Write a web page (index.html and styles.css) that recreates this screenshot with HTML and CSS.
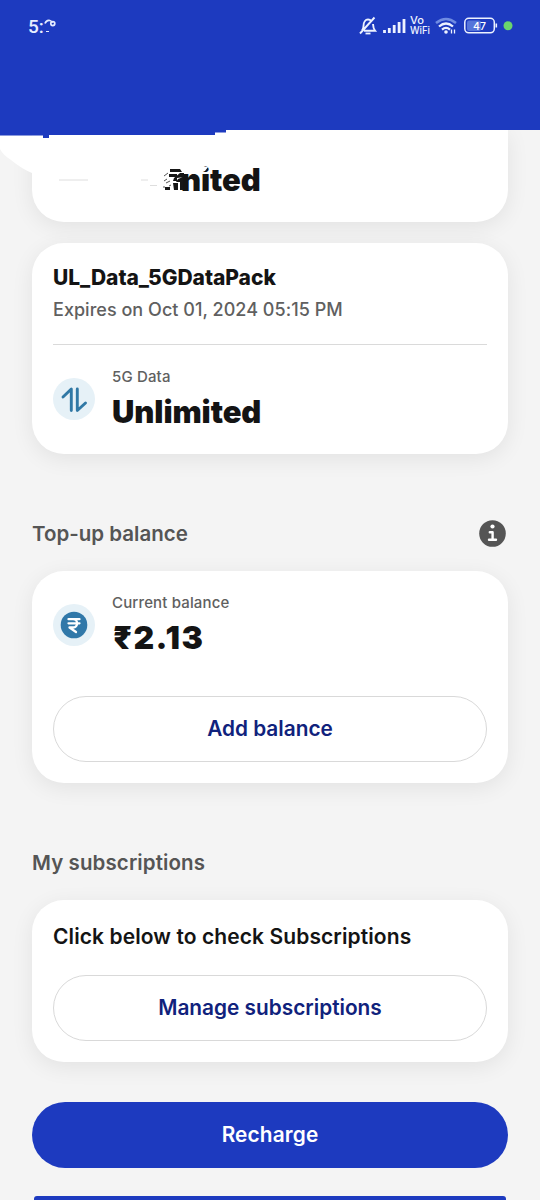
FILE: index.html
```html
<!DOCTYPE html>
<html lang="en">
<head>
<meta charset="utf-8">
<title>Balance</title>
<link rel="stylesheet" href="styles.css">
</head>
<body>
<div class="screen">
  <header class="header">
    <div class="time">5:<svg class="time-rest" width="14" height="16" viewBox="0 0 14 16" fill="none" stroke="#e4ebff" stroke-width="1.7"><path d="M1 5.500Q2.500 1.500 6 2.500Q8 3 8 5"/><circle cx="8.800" cy="5.600" r="2"/><path d="M2 13.500h3" stroke-width="1"/></svg></div>
    <div class="status">
      <svg width="174" height="24" viewBox="356 14 174 24" fill="none" stroke="#edf2ff">
        <path d="M362 30.500q1.500-1.500 1.500-4.500c0-4 2-6.500 4.500-6.500 1.500 0 2.500.5 3.200 1.500M373 24c.2 3.500.5 5 2 6.700H364M360 33.500 374.500 17.500" stroke-width="1.9"/><path d="M365.500 33.500h5" stroke-width="1.800"/>
        <path d="M384.500 33v-3M389.300 33v-5M394.200 33v-8M399.100 33v-11M404 33v-14" stroke-width="2.800"/>
        <g fill="#edf2ff" stroke="none" class="vowifi"><text x="410" y="23.500" textLength="14" lengthAdjust="spacingAndGlyphs">Vo</text><text x="410" y="34.300" textLength="20" lengthAdjust="spacingAndGlyphs">WiFi</text></g>
        <path d="M436 23q10-8 20 0" stroke="#6f8be2" stroke-width="2.600"/>
        <path d="M439 26.500q7-6 14 0M442 29.600q4-3.500 8 0" stroke-width="2.300"/><circle cx="446" cy="32" r="1.800" fill="#edf2ff" stroke="none"/>
        <path d="M451.500 33.500v-4M454.500 29.500v4" stroke-width="1.300"/>
        <rect x="467" y="20.500" width="14" height="10.500" rx="2" fill="#5675da" stroke="none"/>
        <rect x="464.800" y="18.300" width="29.500" height="14.500" rx="4" stroke-width="1.500"/><path d="M496.300 23.500v4" stroke-width="1.600"/>
        <text class="battery" x="479.500" y="29.800" text-anchor="middle" fill="#fff" stroke="none">47</text>
        <circle cx="508" cy="25.700" r="4.500" fill="#6bd56c" stroke="none"/>
      </svg>
    </div>
  </header>
  <main class="content">
    <section class="card card-top"><div class="value value-part">nited</div></section>
    <section class="card pack">
      <h2 class="pack-name">UL_Data_5GDataPack</h2>
      <p class="expiry">Expires on Oct 01, 2024 05:15 PM</p>
      <div class="row usage">
        <svg class="icon" viewBox="0 0 42 42"><circle cx="21" cy="21" r="21" fill="#e6f1f7"/><path d="M10 19 18.300 11v21.500M24.300 11v21.500L32.500 25" fill="none" stroke="#3078a5" stroke-width="2.900" stroke-linecap="round" stroke-linejoin="round"/></svg>
        <div><div class="label">5G Data</div><div class="value">Unlimited</div></div>
      </div>
    </section>
    <div class="section-head"><h3 class="heading">Top-up balance</h3>
      <svg class="info" width="28" height="28" viewBox="0 0 28 28"><circle cx="14.500" cy="14.500" r="13.300" fill="#555"/><circle cx="14.500" cy="7.500" r="2.100" fill="#fff"/><path d="M11.800 13.200H14.600V20.500M11 20.800H18" fill="none" stroke="#fff" stroke-width="2.400" stroke-linecap="round" stroke-linejoin="round"/></svg>
    </div>
    <section class="card balance">
      <div class="row">
        <svg class="icon" viewBox="0 0 42 42"><circle cx="21" cy="21" r="21" fill="#e6f1f7"/><circle cx="21" cy="21" r="13.300" fill="#3078a9"/><path d="M15.500 15.200h11M15.500 19.300h11M16.500 15.200h3.500c5.500 0 5.500 8.300 0 8.300h-3.500l6.500 4.500" fill="none" stroke="#fff" stroke-width="2.300" stroke-linecap="round" stroke-linejoin="round"/></svg>
        <div><div class="label balance-label">Current balance</div><div class="value amount">₹2.13</div></div>
      </div>
      <button class="button outline">Add balance</button>
    </section>
    <div class="section-head"><h3 class="heading subs">My subscriptions</h3></div>
    <section class="card subscriptions">
      <p class="prompt">Click below to check Subscriptions</p>
      <button class="button outline manage">Manage subscriptions</button>
    </section>
    <button class="button primary">Recharge</button>
    <div class="next-button"></div>
  </main>
  <svg class="smear" width="280" height="70" viewBox="0 130 280 70">
    <path d="M0 135.500H215V132.500H226V130H280V160H90L32 173Q22 169 11 160Q3 155 0 149Z" fill="#fff"/>
    <path d="M0 130H226V132.500H215V135H49V138H43V135.500H0Z" fill="#1d3abf"/>
    <path d="M59 180H88M141 180h7M150 185.500h7" stroke="#dedede" fill="none"/>
    <path d="M170 169h10l2 3h-12zM169 174h8v3h-8zM174 178l6-5h4v4l-7 1v3h-4zM173 183h5v7h-4zM178 179l5-2v13h-3v-8h-4zM165 187h5v3h-5z" fill="#161616"/>
    <path d="M164 176l4-3M164 181l3-2M163 187h2M166 183l4-2M169 186l2-1" stroke="#555" stroke-width="1"/>
    <path d="M202 167h6l-3 4h-3z" fill="#fff"/>
  </svg>
</div>
</body>
</html>
```

FILE: styles.css
```css
* { box-sizing: border-box; }
body { margin: 0; background: #f4f4f4; font-family: Inter, "Noto Sans", sans-serif; color: #141414; }
h2, h3, p { margin: 0; }
.screen { position: relative; width: 540px; height: 1200px; overflow: hidden; }
.header { height: 130px; background: #1d3abf; display: flex; justify-content: space-between; padding: 14px 10px 0 28px; position: relative; z-index: 2; }
.time { display: flex; height: 26px; align-items: center; font: 500 19px/26px Roboto, sans-serif; color: #e8eeff; }
.time-rest { margin-top: -3px; }
.status { height: 24px; }
.status svg { display: block; }
.vowifi { font: 500 10px/1 Inter, sans-serif; }
.battery { font: 500 10.5px Inter, sans-serif; }
.content { padding: 0 32px; }
.card { background: #fff; border-radius: 32px; padding: 0 21px; box-shadow: 0 5px 22px rgba(0, 0, 0, .075); }
.card-top { height: 92px; border-radius: 0 0 32px 32px; padding: 32px 21px 0 149px; }
.pack { height: 211px; margin-top: 21px; padding-top: 22px; }
.pack-name { font-size: 21px; line-height: 25px; font-weight: 850; letter-spacing: -.03px; }
.expiry { margin-top: 8px; font-size: 18px; line-height: 24px; font-weight: 450; letter-spacing: .03px; color: #606060; }
.row { display: flex; align-items: center; gap: 17px; }
.usage { margin-top: 22px; border-top: 1px solid #dadada; padding-top: 23px; }
.icon { width: 42px; height: 42px; flex: none; }
.label { font-size: 15px; line-height: 18px; font-weight: 450; letter-spacing: .15px; color: #606060; }
.value { margin-top: 8px; font-size: 31px; line-height: 36px; font-weight: 900; letter-spacing: -.1px; }
.value-part { margin: 0; }
.amount { font-size: 32px; letter-spacing: 1.3px; margin-left: 1px; }
.section-head { display: flex; align-items: center; justify-content: space-between; height: 28px; margin: 65px 2px 24px 0; }
.heading { padding-top: 2px; font-size: 20.5px; line-height: 28px; font-weight: 630; letter-spacing: 0; color: #555; }
.subs { letter-spacing: .1px; }
.balance { height: 212px; padding-top: 23px; }
.button { display: flex; align-items: center; justify-content: center; width: 100%; height: 66px; border-radius: 33px; padding: 0 6px 1px; font: 630 20.8px Inter, sans-serif; letter-spacing: 0; border: 0; }
.outline { background: #fff; border: 1px solid #d9d9d9; color: #10227c; }
.balance .outline { margin-top: 40px; }
.subscriptions { height: 162px; padding-top: 25px; }
.prompt { font-size: 21px; line-height: 24px; font-weight: 630; margin-bottom: 26px; letter-spacing: .09px; }
.primary { margin-top: 40px; background: #1d3abf; color: #fff; letter-spacing: .15px; }
.next-button { height: 20px; margin: 28px 2px 0; background: #1d3abf; border-radius: 3px; }
.smear { position: absolute; top: 130px; left: 0; z-index: 3; }
```
